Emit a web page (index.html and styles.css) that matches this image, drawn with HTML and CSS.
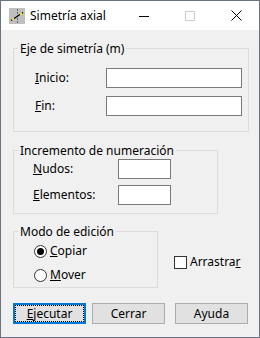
FILE: index.html
```html
<!DOCTYPE html>
<html lang="es">
<head>
<meta charset="utf-8">
<title>Simetría axial</title>
<link rel="stylesheet" href="styles.css">
</head>
<body>
<div class="window">
  <div class="titlebar">
    <svg class="app-icon" width="16" height="16" viewBox="0 0 16 16">
      <rect x="0" y="0" width="16" height="16" fill="#bfbfbf"/>
      <path d="M8.5 1V15" stroke="#6a6a6a" stroke-width="1" stroke-dasharray="2 1"/>
      <path d="M2 12.5L14 4.5" stroke="#000" stroke-width="1.2"/>
      <rect x="3" y="10" width="2" height="2" fill="#f5e61a"/>
      <rect x="11" y="5" width="2" height="2" fill="#f5e61a"/>
    </svg>
    <span class="title">Simetría axial</span>
    <div class="controls">
      <span class="ctl"><svg width="10" height="10" viewBox="0 0 10 10"><path d="M0 5.5H10" stroke="#000"/></svg></span>
      <span class="ctl"><svg width="10" height="10" viewBox="0 0 10 10"><rect x="0.5" y="0.5" width="9" height="9" fill="none" stroke="#cccccc"/></svg></span>
      <span class="ctl"><svg width="11" height="11" viewBox="0 0 11 11"><path d="M0.5 0.5L10.5 10.5M10.5 0.5L0.5 10.5" stroke="#000"/></svg></span>
    </div>
  </div>

  <div class="client">
    <fieldset class="group g1">
      <legend>Eje de simetría (m)</legend>
      <div class="rows rows1">
        <label class="lbl"><u>I</u>nicio:</label><input class="field" type="text">
        <label class="lbl"><u>F</u>in:</label><input class="field" type="text">
      </div>
    </fieldset>

    <fieldset class="group g2">
      <legend>Incremento de numeración</legend>
      <div class="rows rows2">
        <label class="lbl"><u>N</u>udos:</label><input class="field" type="text">
        <label class="lbl"><u>E</u>lementos:</label><input class="field" type="text">
      </div>
    </fieldset>

    <div class="mode-row">
      <fieldset class="group g3">
        <legend>Modo de edición</legend>
        <div class="opts">
          <div class="opt"><span class="radio on"></span><span><u>C</u>opiar</span></div>
          <div class="opt opt2"><span class="radio"></span><span><u>M</u>over</span></div>
        </div>
      </fieldset>
      <div class="check"><span class="box"></span><span>Arrastra<u>r</u></span></div>
    </div>

    <div class="buttons">
      <button class="btn default" type="button"><u>E</u>jecutar</button>
      <button class="btn" type="button">Cerrar</button>
      <button class="btn help" type="button">Ayuda</button>
    </div>
  </div>
</div>
</body>
</html>
```

FILE: styles.css
```css
* { box-sizing: border-box; }
html, body { margin: 0; padding: 0; }
body {
  font-family: "Noto Sans", "Segoe UI", sans-serif;
  font-size: 12px;
  color: #000;
  background: #ffffff;
}
.window {
  width: 260px;
  height: 338px;
  border: 1px solid #6b7380;
  background: #f0f0f0;
  display: flex;
  flex-direction: column;
}
.titlebar {
  height: 29px;
  background: #ffffff;
  display: flex;
  align-items: center;
  padding-left: 8px;
  flex-shrink: 0;
}
.app-icon { display: block; }
.title { margin-left: 5px; line-height: 16px; }
.controls { margin-left: auto; display: flex; height: 100%; }
.ctl {
  width: 46px;
  display: flex;
  align-items: center;
  justify-content: center;
}
.ctl svg { display: block; }

.client {
  padding: 10px 0 0 12px;
  display: flex;
  flex-direction: column;
  align-items: flex-start;
}
.group {
  margin: 0;
  padding: 0;
  border: 1px solid #dcdcdc;
  min-width: 0;
}
.group legend {
  margin-left: 4px;
  padding: 0 2px;
  line-height: 17px;
  height: 17px;
  white-space: nowrap;
}
.rows { display: grid; align-items: center; }
.lbl { line-height: 16px; }
.field {
  display: block;
  height: 20px;
  margin: 0;
  padding: 0;
  border: 1px solid #7a7a7a;
  background: #fff;
  font: inherit;
}
.g1 { width: 236px; }
.rows1 {
  padding: 11px 6px 15px 21px;
  grid-template-columns: 71px 136px;
  row-gap: 8px;
}
.rows1 .field { width: 136px; }
.g2 { width: 205px; margin-top: 10px; }
.rows2 {
  padding: 0 46px 8px 19px;
  grid-template-columns: 85px 53px;
  row-gap: 6px;
}
.rows2 .field { width: 53px; }

.mode-row { display: flex; align-items: flex-start; margin-top: 9px; }
.g3 { width: 145px; }
.opts { padding: 3px 0 4px 20px; }
.opt { display: flex; align-items: center; gap: 3px; height: 16px; line-height: 16px; }
.opt2 { margin-top: 8px; }
.radio {
  width: 13px;
  height: 13px;
  border: 1px solid #333;
  border-radius: 50%;
  background: #fff;
  display: flex;
  align-items: center;
  justify-content: center;
}
.radio.on::after {
  content: "";
  width: 7px;
  height: 7px;
  border-radius: 50%;
  background: #000;
}
.check {
  margin-left: 16px;
  margin-top: 31px;
  display: flex;
  align-items: center;
  gap: 3px;
  height: 16px;
  line-height: 16px;
}
.box {
  width: 13px;
  height: 13px;
  border: 1px solid #333;
  background: #fff;
}

.buttons { display: flex; margin-top: 15px; }
.btn {
  width: 73px;
  height: 21px;
  margin: 0;
  padding: 0;
  background: #e1e1e1;
  border: 1px solid #adadad;
  font: inherit;
  color: #000;
  line-height: 17px;
}
.btn + .btn { margin-left: 6px; }
.btn.help { margin-left: 10px; }
.btn.default {
  border: 2px solid #0078d7;
  outline: 1px dotted #000;
  outline-offset: -3px;
}
```
